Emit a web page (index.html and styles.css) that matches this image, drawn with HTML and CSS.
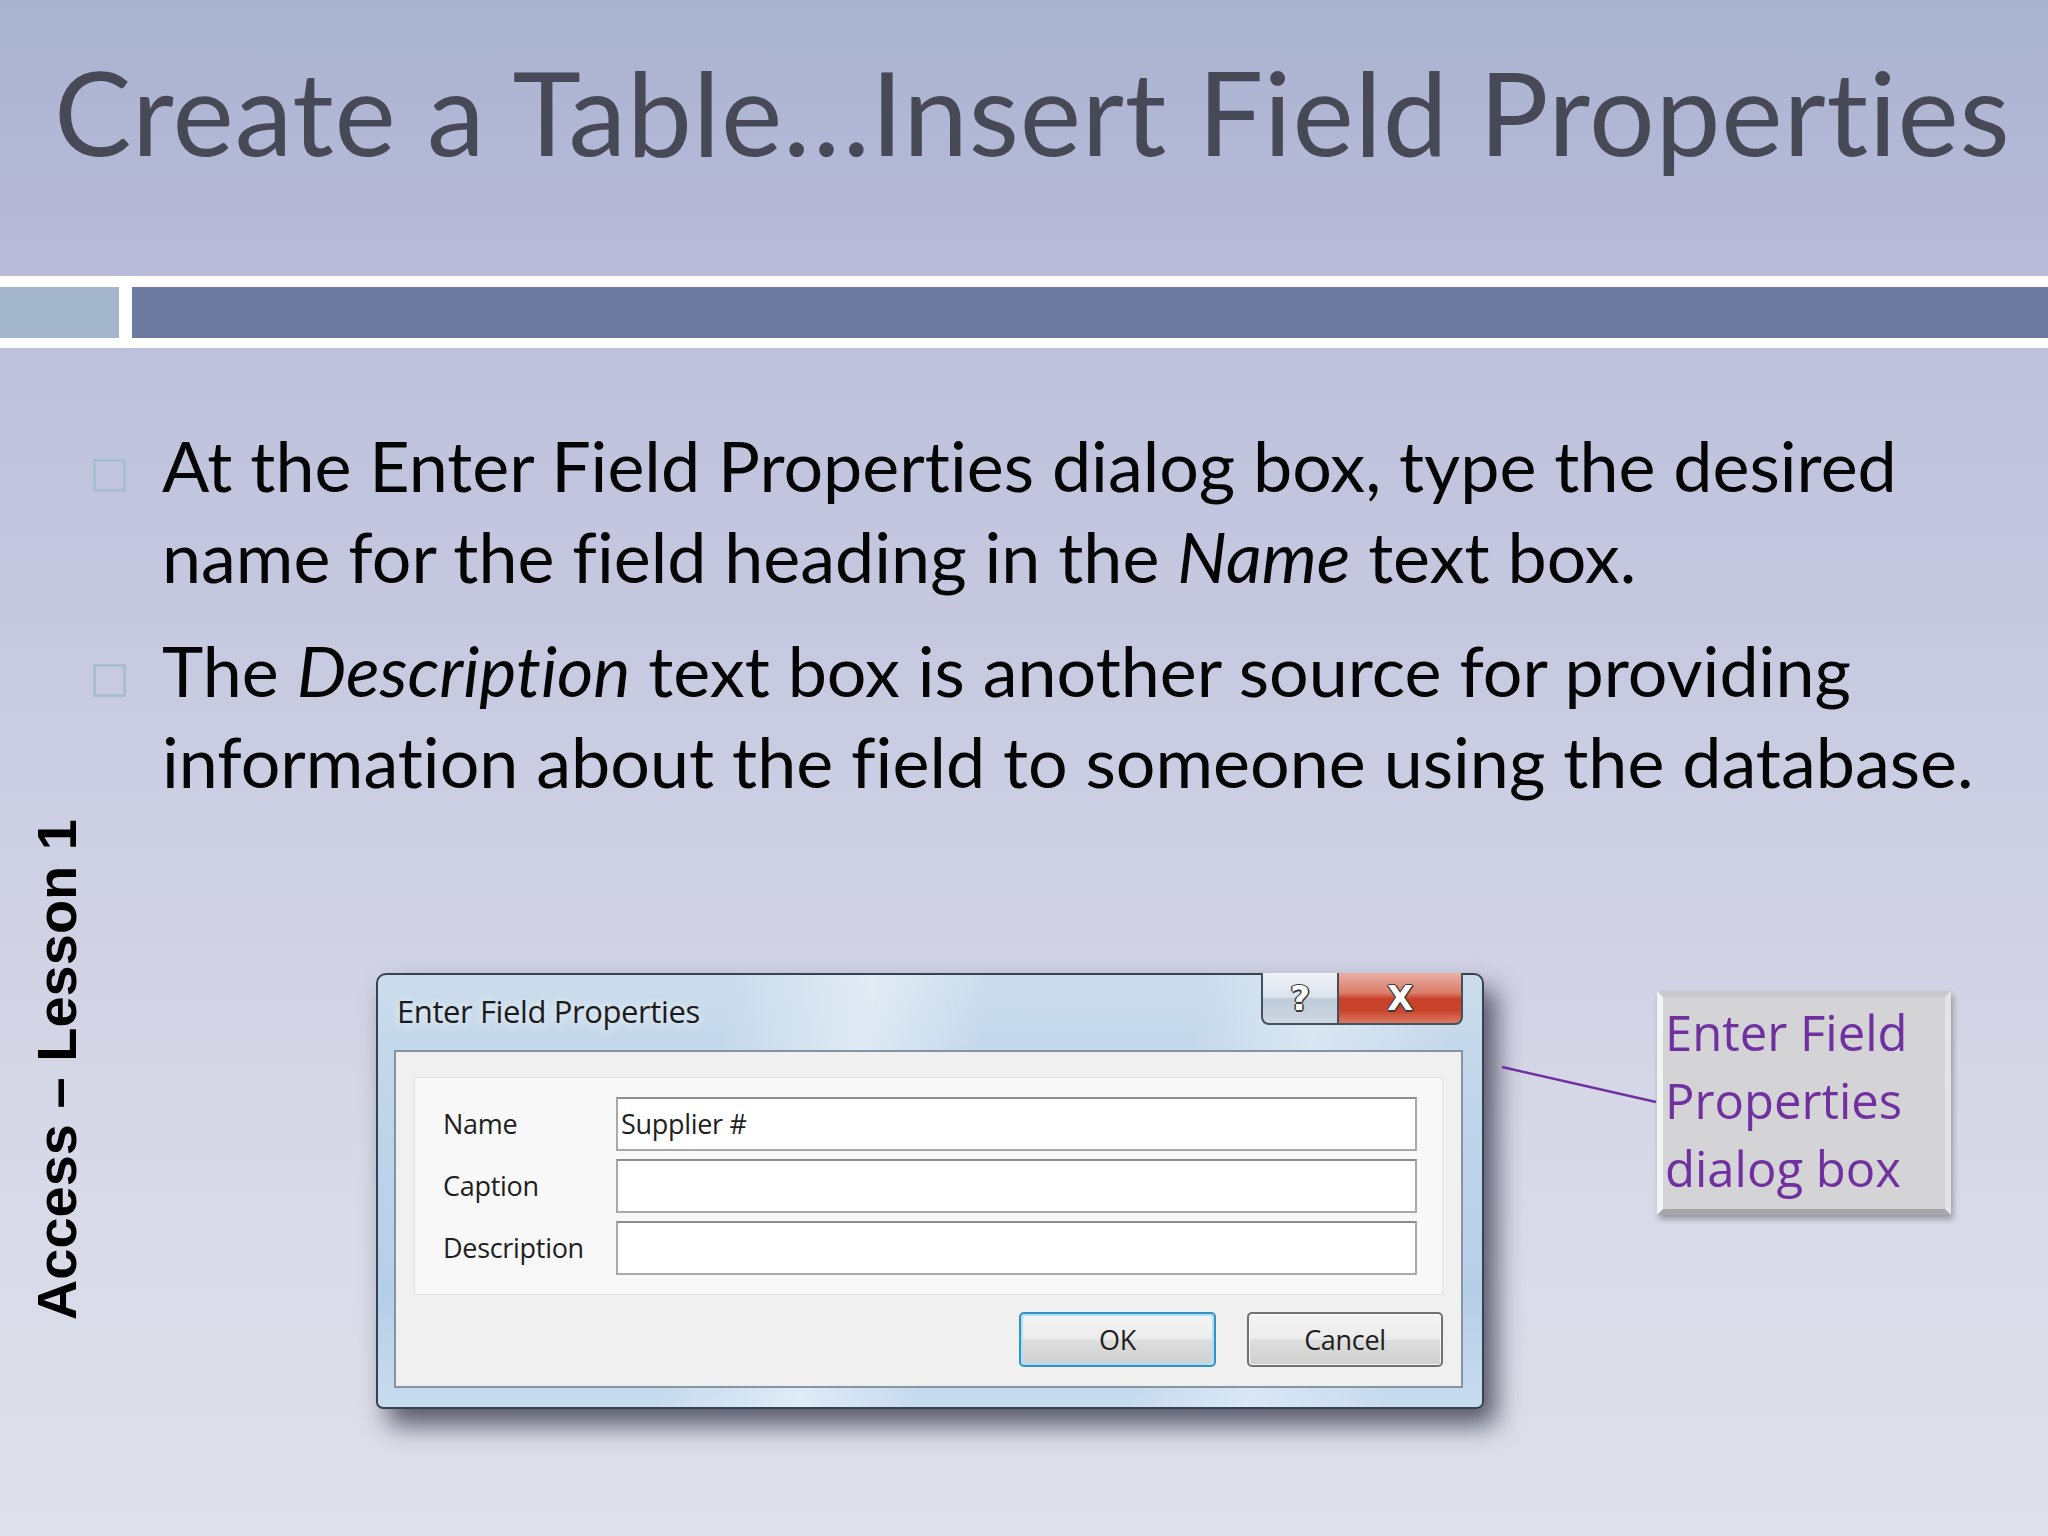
FILE: index.html
```html
<!DOCTYPE html>
<html lang="en">
<head>
<meta charset="utf-8">
<title>Create a Table…Insert Field Properties</title>
<link rel="stylesheet" href="styles.css">
</head>
<body>
<div class="slide">
  <header class="title-area">
    <h1 class="title">Create a Table…Insert Field Properties</h1>
  </header>
  <div class="rule">
    <div class="rule-accent"></div>
    <div class="rule-main"></div>
  </div>
  <div class="content">
    <aside class="side">
      <div class="side-label">Access – Lesson 1</div>
    </aside>
    <main class="main">
      <ul class="bullets">
        <li class="bullet">
          <span class="marker"></span>
          <p class="bullet-text">At the Enter Field Properties dialog box, type the desired<br>name for the field heading in the <i>Name</i> text box.</p>
        </li>
        <li class="bullet">
          <span class="marker"></span>
          <p class="bullet-text">The <i>Description</i> text box is another source for providing<br>information about the field to someone using the database.</p>
        </li>
      </ul>
      <div class="figure">
        <div class="dialog">
          <div class="titlebar">
            <span class="dlg-title">Enter Field Properties</span>
            <div class="caption-btns">
              <span class="cap-btn cap-help">?</span>
              <span class="cap-btn cap-close">X</span>
            </div>
          </div>
          <div class="client">
            <div class="panel">
              <span class="lbl">Name</span>
              <span class="tbox">Supplier #</span>
              <span class="lbl">Caption</span>
              <span class="tbox"></span>
              <span class="lbl">Description</span>
              <span class="tbox"></span>
            </div>
            <div class="buttons">
              <span class="btn btn-default">OK</span>
              <span class="btn">Cancel</span>
            </div>
          </div>
        </div>
        <div class="callout">Enter Field<br>Properties<br>dialog box</div>
        <svg class="connector" width="154" height="35" viewBox="0 0 154 35">
          <line x1="0" y1="0" x2="154" y2="35" stroke="#7030a0" stroke-width="2.5"/>
        </svg>
      </div>
    </main>
  </div>
</div>
</body>
</html>
```
FILE: styles.css
```css
* { box-sizing: border-box; }
body { margin: 0; }
.slide {
  width: 2048px;
  height: 1536px;
  overflow: hidden;
  display: flex;
  flex-direction: column;
  font-variant-ligatures: none;
}
.title-area {
  height: 276px;
  padding: 54px 0 0 54px;
  background: linear-gradient(180deg, #a9b3d0 0%, #b3b8d6 60%, #b9bbd8 100%);
}
.title {
  margin: 0;
  font-family: Lato, "Open Sans", sans-serif;
  font-weight: 400;
  font-size: 116px;
  line-height: 116px;
  letter-spacing: 0.8px;
  color: #484957;
  white-space: nowrap;
}
.rule {
  background: #ffffff;
  padding: 11px 0 10px;
  display: flex;
  gap: 13px;
}
.rule-accent { width: 119px; height: 51px; background: #a2b5cb; }
.rule-main { flex: 1; height: 51px; background: #6f7aa3; }
.content {
  flex: 1;
  display: flex;
  background: linear-gradient(180deg, #bec1dc 0%, #c9cbe1 30%, #d6d8e7 65%, #dfe0ea 100%);
}
.side { width: 93px; flex: none; padding-left: 28px; }
.side-label {
  margin-top: 471px;
  writing-mode: vertical-rl;
  transform: rotate(180deg);
  font-family: "Liberation Sans", Arial, sans-serif;
  font-weight: 700;
  font-size: 56px;
  line-height: 57px;
  color: #000;
  white-space: nowrap;
}
.main { flex: 1; }
.bullets {
  list-style: none;
  margin: 0;
  padding: 72px 0 0 0;
}
.bullet {
  display: flex;
  align-items: flex-start;
  gap: 36px;
}
.bullet + .bullet { margin-top: 23px; }
.marker {
  flex: none;
  width: 33px;
  height: 33px;
  margin-top: 39px;
  border: 3px solid #a9bece;
}
.bullet-text {
  margin: 0;
  font-family: Lato, "Open Sans", sans-serif;
  font-size: 70px;
  line-height: 91px;
  color: #050505;
  white-space: nowrap;
}
.figure {
  position: relative;
  display: flex;
  align-items: flex-start;
  margin-top: 166px;
}
.dialog {
  margin-left: 283px;
  width: 1108px;
  height: 436px;
  border: 2px solid #36424f;
  border-radius: 10px 10px 7px 7px;
  padding: 0 19px 19px 16px;
  background:
    linear-gradient(100deg, rgba(255,255,255,0) 30%, rgba(255,255,255,0.45) 42%, rgba(255,255,255,0) 52%, rgba(255,255,255,0) 70%, rgba(255,255,255,0.35) 80%, rgba(255,255,255,0) 92%),
    linear-gradient(180deg, #cbdcec 0%, #bcd3ea 40%, #b6cfe8 75%, #c8dcef 100%);
  box-shadow: 12px 16px 26px rgba(30, 30, 50, 0.7);
  display: flex;
  flex-direction: column;
}
.titlebar {
  height: 75px;
  display: flex;
  align-items: flex-start;
  flex: none;
}
.dlg-title {
  margin-top: 16px;
  padding-left: 3px;
  font-family: "Open Sans", "Noto Sans", sans-serif;
  font-size: 31px;
  line-height: 40px;
  letter-spacing: -0.4px;
  color: #1c1c1c;
  text-shadow: 0 0 8px rgba(255,255,255,0.9);
}
.caption-btns {
  margin-left: auto;
  margin-top: -2px;
  display: flex;
  height: 52px;
}
.cap-btn {
  display: flex;
  align-items: center;
  justify-content: center;
  height: 52px;
  border: 2px solid #43505e;
  border-top: none;
  font-family: "DejaVu Sans", sans-serif;
  font-weight: 700;
  color: #ffffff;
  text-shadow: 1.5px 0 0 #3a3a3a, -1.5px 0 0 #3a3a3a, 0 1.5px 0 #3a3a3a, 0 -1.5px 0 #3a3a3a, 1px 1px 1px #3a3a3a;
}
.cap-help {
  width: 76px;
  border-right: none;
  border-radius: 0 0 0 8px;
  font-size: 34px;
  background: linear-gradient(180deg, #eef2f6 0%, #dbe3ec 48%, #bfcbd8 52%, #cdd8e4 100%);
}
.cap-close {
  width: 126px;
  border-radius: 0 0 8px 0;
  font-size: 34px;
  background: linear-gradient(180deg, #eab0a4 0%, #dc7c68 40%, #c94029 52%, #c9442c 75%, #dc7a64 100%);
}
.client {
  flex: 1;
  border: 2px solid #8593a2;
  background: #f0f0f0;
  padding: 25px 18px 19px 18px;
  display: flex;
  flex-direction: column;
}
.panel {
  height: 218px;
  border: 1px solid #e2e2e2;
  background: #f8f8f8;
  padding: 19px 25px 19px 28px;
  display: grid;
  grid-template-columns: 173px 1fr;
  grid-auto-rows: 54px;
  row-gap: 8px;
}
.lbl, .tbox, .btn {
  font-family: "Open Sans", "Noto Sans", sans-serif;
  font-size: 27px;
  line-height: 50px;
  color: #1e1e1e;
  letter-spacing: -0.3px;
}
.lbl { line-height: 54px; }
.tbox {
  background: #ffffff;
  border: 2px solid #a9a9a9;
  border-top-color: #8e8e8e;
  padding-left: 3px;
}
.buttons {
  margin-top: 17px;
  display: flex;
  justify-content: flex-end;
  gap: 31px;
}
.btn {
  width: 196px;
  height: 55px;
  border: 2px solid #707070;
  border-radius: 5px;
  display: flex;
  align-items: center;
  justify-content: center;
  background: linear-gradient(180deg, #f4f4f4 0%, #ececec 48%, #dddddd 52%, #d0d0d0 100%);
  box-shadow: inset 0 0 0 1px rgba(255,255,255,0.8);
}
.btn-default {
  width: 197px;
  border-color: #3a8fc2;
  box-shadow: inset 0 0 0 2px #a8e4f6;
}
.callout {
  margin-left: 173px;
  margin-top: 18px;
  width: 294px;
  height: 224px;
  border-style: solid;
  border-width: 6px;
  border-color: #c9c9cc #e4e4e6 #a6a6aa #f3f3f4;
  background: #d4d4d7;
  box-shadow: 2px 4px 6px rgba(0,0,0,0.3);
  padding: 1px 0 0 2px;
  font-family: "Open Sans", "Noto Sans", sans-serif;
  font-size: 49px;
  line-height: 68px;
  color: #7030a0;
  white-space: nowrap;
}
.connector {
  position: absolute;
  left: 1409px;
  top: 94px;
  overflow: visible;
}
```
